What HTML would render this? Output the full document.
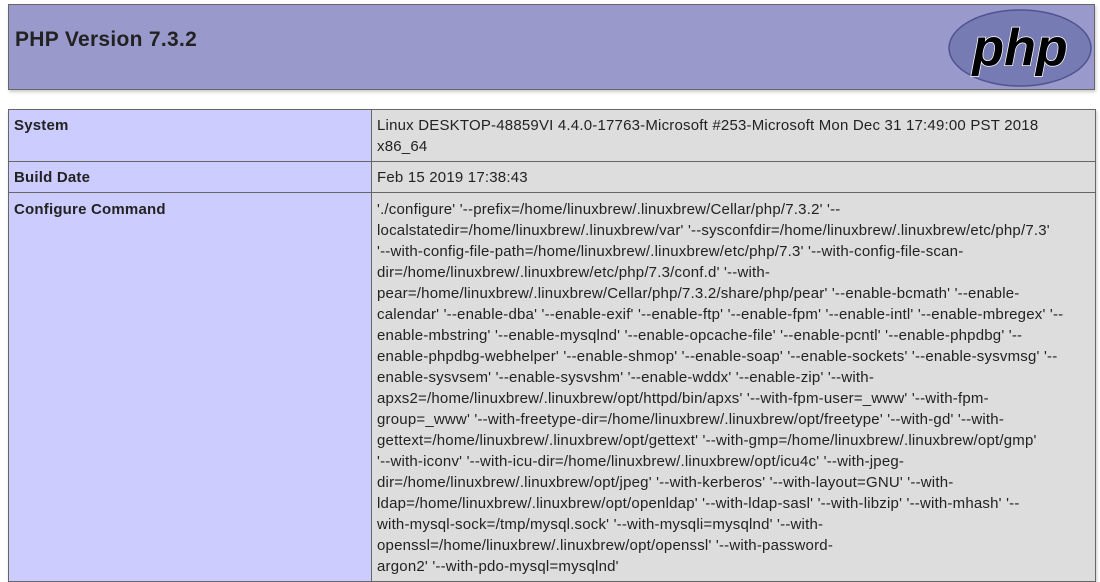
<!DOCTYPE html>
<html><head><meta charset="utf-8"><style>
body{margin:0;background:#fff;font-family:"Liberation Sans","DejaVu Sans",sans-serif;color:#222;width:1100px;height:550px;overflow:hidden;position:relative}
.hdr{position:absolute;left:8px;top:4px;width:1085px;height:84px;background:#9999cc;border:1px solid #666;box-shadow:1px 2px 3px #ccc}
.hdr h1{position:absolute;left:6px;top:23px;margin:0;font-size:21px;font-weight:bold;color:#222;letter-spacing:0.3px}
table{position:absolute;left:8px;top:109px;border-collapse:collapse;width:1088px;font-size:15px;letter-spacing:0.2px;box-shadow:1px 2px 3px #ccc}
td{border:1px solid #666;vertical-align:top;padding:5px 5px 4px 5px;line-height:21px;white-space:nowrap;overflow:hidden}
td.e{background:#ccccff;font-weight:bold;width:352px}
td.v{background:#dddddd;max-width:710px}
tr.c td{padding-top:6px}
</style></head><body>
<div class="hdr"><h1>PHP Version 7.3.2</h1>
<svg style="position:absolute;left:937px;top:3px" width="150" height="80" viewBox="0 0 150 80">
<ellipse cx="74" cy="40" rx="71" ry="38" fill="#777bb3" stroke="#4f5390" stroke-width="1.5"/>
<text x="74" y="57" text-anchor="middle" font-family="Liberation Sans,sans-serif" font-weight="bold" font-style="italic" font-size="52" fill="#000" stroke="#fff" stroke-width="1.5" paint-order="stroke">php</text>
</svg></div>
<table>
<tr><td class="e">System</td><td class="v">Linux DESKTOP-48859VI 4.4.0-17763-Microsoft #253-Microsoft Mon Dec 31 17:49:00 PST 2018<br>x86_64</td></tr>
<tr><td class="e">Build Date</td><td class="v">Feb 15 2019 17:38:43</td></tr>
<tr class="c"><td class="e">Configure Command</td><td class="v">'./configure' '--prefix=/home/linuxbrew/.linuxbrew/Cellar/php/7.3.2' '--<br>localstatedir=/home/linuxbrew/.linuxbrew/var' '--sysconfdir=/home/linuxbrew/.linuxbrew/etc/php/7.3'<br>'--with-config-file-path=/home/linuxbrew/.linuxbrew/etc/php/7.3' '--with-config-file-scan-<br>dir=/home/linuxbrew/.linuxbrew/etc/php/7.3/conf.d' '--with-<br>pear=/home/linuxbrew/.linuxbrew/Cellar/php/7.3.2/share/php/pear' '--enable-bcmath' '--enable-<br>calendar' '--enable-dba' '--enable-exif' '--enable-ftp' '--enable-fpm' '--enable-intl' '--enable-mbregex' '--<br>enable-mbstring' '--enable-mysqlnd' '--enable-opcache-file' '--enable-pcntl' '--enable-phpdbg' '--<br>enable-phpdbg-webhelper' '--enable-shmop' '--enable-soap' '--enable-sockets' '--enable-sysvmsg' '--<br>enable-sysvsem' '--enable-sysvshm' '--enable-wddx' '--enable-zip' '--with-<br>apxs2=/home/linuxbrew/.linuxbrew/opt/httpd/bin/apxs' '--with-fpm-user=_www' '--with-fpm-<br>group=_www' '--with-freetype-dir=/home/linuxbrew/.linuxbrew/opt/freetype' '--with-gd' '--with-<br>gettext=/home/linuxbrew/.linuxbrew/opt/gettext' '--with-gmp=/home/linuxbrew/.linuxbrew/opt/gmp'<br>'--with-iconv' '--with-icu-dir=/home/linuxbrew/.linuxbrew/opt/icu4c' '--with-jpeg-<br>dir=/home/linuxbrew/.linuxbrew/opt/jpeg' '--with-kerberos' '--with-layout=GNU' '--with-<br>ldap=/home/linuxbrew/.linuxbrew/opt/openldap' '--with-ldap-sasl' '--with-libzip' '--with-mhash' '--<br>with-mysql-sock=/tmp/mysql.sock' '--with-mysqli=mysqlnd' '--with-<br>openssl=/home/linuxbrew/.linuxbrew/opt/openssl' '--with-password-<br>argon2' '--with-pdo-mysql=mysqlnd'</td></tr>
</table>
</body></html>
